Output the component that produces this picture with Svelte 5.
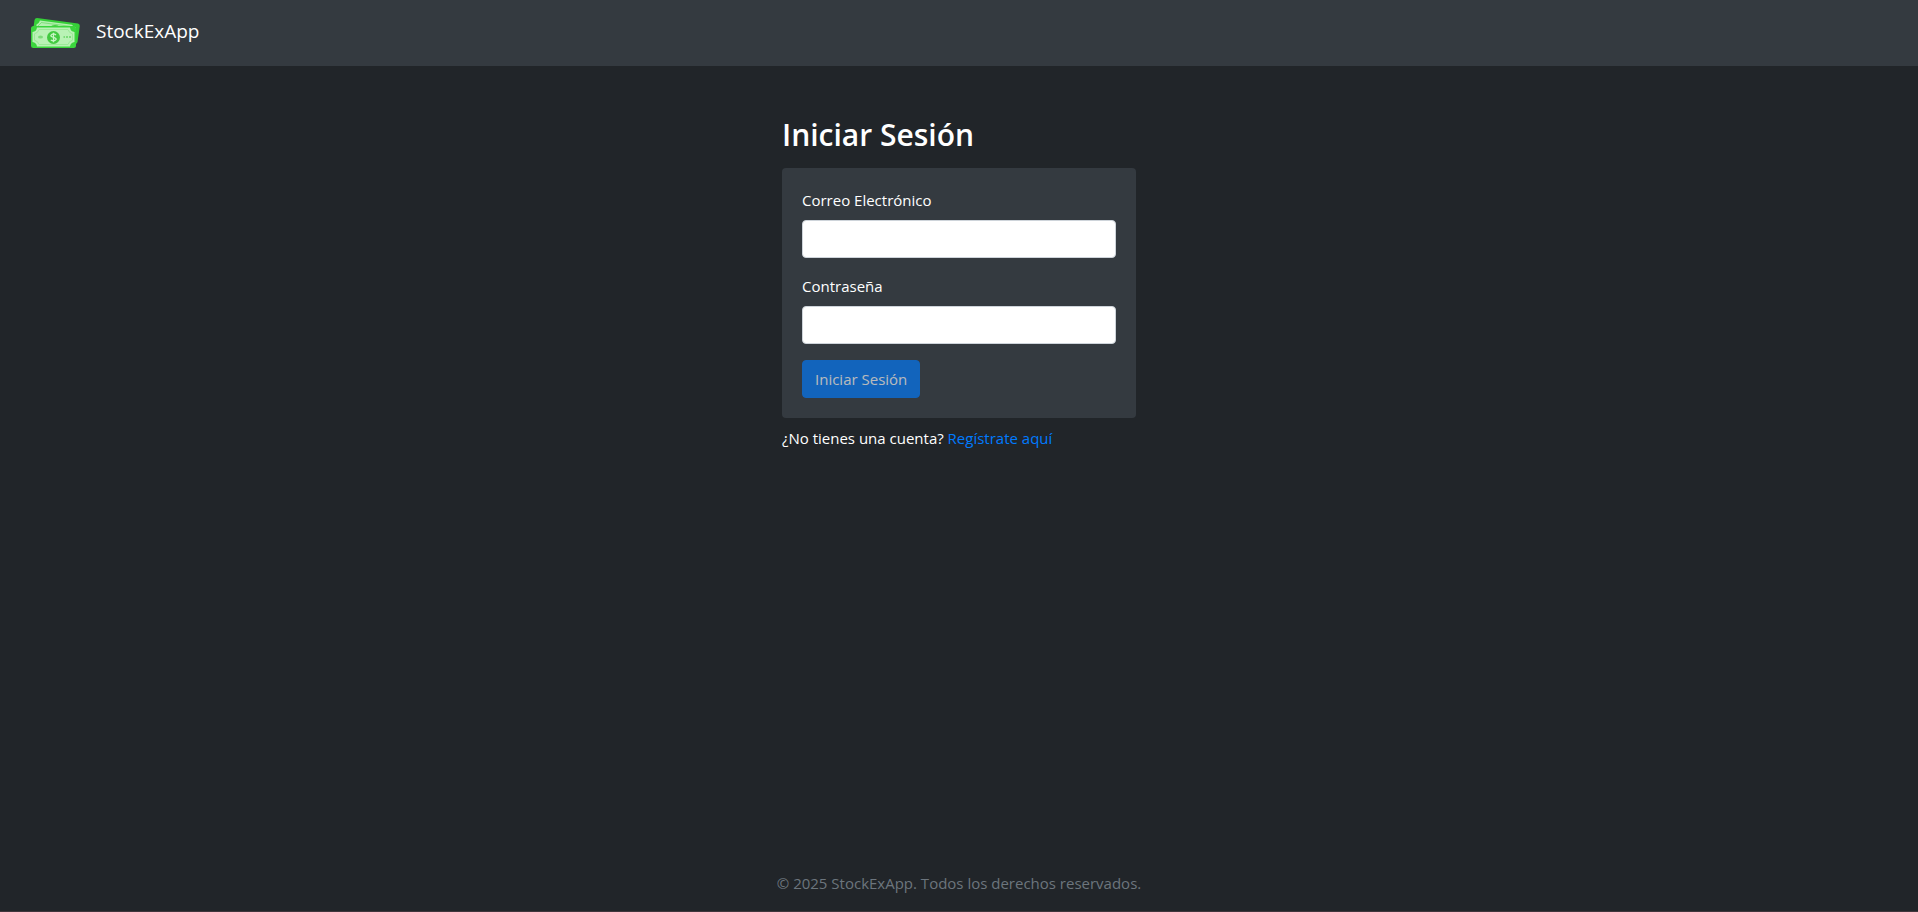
<script>
  let email = $state('');
  let password = $state('');
  const ready = $derived(email.trim() !== '' && password !== '');
</script>

<div class="page">
  <header>
    <a class="brand" href="#inicio">
      <svg width="60" height="50" viewBox="0 0 60 50" aria-hidden="true">
        <path d="M13 10L54 15.500Q56 16 55.800 18L53.500 34Q53 36 51 36L8 30L10.500 12Q11 10 13 10Z" fill="#36cf38" />
        <path d="M16 12.500L48 16.800Q49 19 52 19.500L51 28L12 22L12.500 16.500Q15 15.500 16 12.500Z" fill="#b4f0b0" />
        <path d="M17 14.500L46 18.300M14 18L17 15" fill="none" stroke="#7fdf7b" />
        <ellipse cx="31" cy="19" rx="4" ry="2" fill="#46cc44" />
        <rect x="7" y="18" width="45" height="22" rx="2.500" fill="#3bd53d" />
        <path d="M13 19.500H46Q46.500 23.500 50.500 24V34Q46.500 34.500 46 38.500H13Q12.500 34.500 8.500 34V24Q12.500 23.500 13 19.500Z" fill="#b9f2b5" />
        <path d="M15 21.500H44Q45 25 48.500 25.800V32.200Q45 33 44 36.500H15Q14 33 10.500 32.200V25.800Q14 25 15 21.500Z" fill="none" stroke="#9be997" />
        <circle cx="29.500" cy="29.500" r="6.500" fill="#42ca40" />
        <path d="M32 27Q29.500 25 27.500 26.700T29.500 29.400T31.500 32T26.800 32M29.500 24.800V34.200" fill="none" stroke="#c9f6c6" stroke-width="1.300" />
        <ellipse cx="16.500" cy="29" rx="2.500" ry="1.500" fill="#7cdc79" />
        <path d="M39.500 29h1.500M42 29h2M45 29h2" stroke="#7cdc79" stroke-width="2" />
      </svg>
      <span>StockExApp</span>
    </a>
  </header>

  <main>
    <section>
      <h2>Iniciar Sesión</h2>
      <form onsubmit={(e) => e.preventDefault()}>
        <div class="group">
          <label for="email">Correo Electrónico</label>
          <input id="email" type="email" bind:value={email} />
        </div>
        <div class="group">
          <label for="password">Contraseña</label>
          <input id="password" type="password" bind:value={password} />
        </div>
        <button type="submit" disabled={!ready}>Iniciar Sesión</button>
      </form>
      <p>¿No tienes una cuenta? <a href="#registro">Regístrate aquí</a></p>
    </section>
  </main>

  <footer>© 2025 StockExApp. Todos los derechos reservados.</footer>
</div>

<style>
  :global(body) {
    margin: 0;
    background: #212529;
  }
  .page, .page * { box-sizing: border-box; }
  .page {
    min-height: 100vh;
    display: flex;
    flex-direction: column;
    background: #212529;
    color: #fff;
    font-family: "Segoe UI", "Open Sans", "Noto Sans", sans-serif;
    font-size: 15px;
    line-height: 24px;
  }
  header {
    display: flex;
    background: #343a40;
    padding: 8px 24px;
  }
  .brand {
    display: flex;
    align-items: center;
    gap: 12px;
    color: #fff;
    font-size: 19px;
    line-height: 30px;
    text-decoration: none;
  }
  .brand span { padding-bottom: 4px; }
  main {
    flex: 1;
    display: flex;
    justify-content: center;
    padding: 50px 15px;
  }
  section {
    width: 100%;
    max-width: 354px;
  }
  h2 {
    margin: 0 0 14px;
    font-size: 30px;
    line-height: 38px;
    font-weight: 600;
  }
  form {
    padding: 20px;
    border-radius: 4px;
    background: #343a40;
  }
  .group { margin-bottom: 16px; }
  label {
    display: block;
    margin-bottom: 8px;
  }
  input {
    display: block;
    width: 100%;
    height: 38px;
    padding: 6px 12px;
    border: 1px solid #ced4da;
    border-radius: 4px;
    background: #fff;
    color: #495057;
    font: inherit;
  }
  button {
    display: block;
    padding: 6px 12px;
    border: 1px solid #007bff;
    border-radius: 4px;
    background: #007bff;
    color: #fff;
    font: inherit;
    cursor: pointer;
  }
  button:disabled {
    opacity: 0.65;
    cursor: default;
  }
  p { margin: 8px 0 0; }
  p a {
    color: #007bff;
    text-decoration: none;
  }
  footer {
    padding: 16px;
    color: #6c757d;
    text-align: center;
    border-bottom: 1px solid #40363c;
  }
</style>
